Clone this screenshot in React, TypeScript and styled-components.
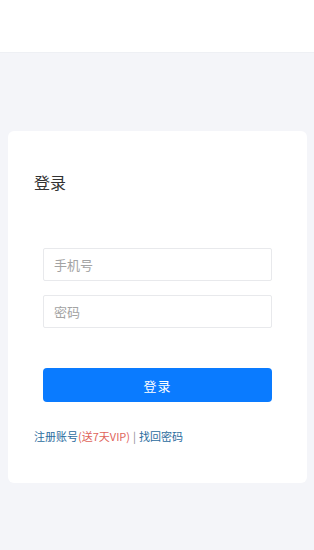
import React from "react";
import styled, { createGlobalStyle } from "styled-components";

const Global = createGlobalStyle`
  html, body { margin: 0; padding: 0; background: #f4f5f9; }
  body { font-family: "Noto Sans CJK SC", "Noto Sans", sans-serif; }
  * { box-sizing: border-box; }
`;

const Page = styled.div`
  min-height: 550px;
  display: flex;
  flex-direction: column;
  background: #f4f5f9;
`;

const Header = styled.div`
  height: 53px;
  background: #ffffff;
  border-bottom: 1px solid #eef0f4;
`;

const Card = styled.div`
  margin: 78px 7px 0 8px;
  height: 352px;
  background: #ffffff;
  border-radius: 6px;
  padding: 40px 0 0 26px;
  display: flex;
  flex-direction: column;
`;

const Title = styled.h2`
  margin: 0;
  font-size: 16px;
  font-weight: 400;
  line-height: 22px;
  color: #333333;
`;

const Form = styled.div`
  margin: 55px 0 0 9px;
  width: 229px;
  display: flex;
  flex-direction: column;
  gap: 14px;
`;

const Input = styled.input`
  height: 33px;
  width: 100%;
  border: 1px solid #e8e9ec;
  border-radius: 2px;
  padding: 0 10px;
  font-family: inherit;
  font-size: 13px;
  color: #333;
  outline: none;
  &::placeholder { color: #a3a3a3; }
`;

const Button = styled.button`
  margin: 40px 0 0 9px;
  width: 229px;
  height: 34px;
  border: none;
  border-radius: 4px;
  background: #0a7bff;
  color: #ffffff;
  font-family: inherit;
  font-size: 13px;
  letter-spacing: 1px;
`;

const Links = styled.div`
  margin-top: 26px;
  font-size: 11px;
  line-height: 16px;
  color: #2b6c9e;
`;

const Red = styled.span`
  color: #e0645a;
`;

const Sep = styled.span`
  color: #8a8a8a;
  margin: 0 3px;
`;

export default function App() {
  return (
    <>
      <Global />
      <Page>
        <Header />
        <Card>
          <Title>登录</Title>
          <Form>
            <Input placeholder="手机号" />
            <Input placeholder="密码" type="password" />
          </Form>
          <Button>登录</Button>
          <Links>
            注册账号<Red>(送7天VIP)</Red><Sep>|</Sep>找回密码
          </Links>
        </Card>
      </Page>
    </>
  );
}
